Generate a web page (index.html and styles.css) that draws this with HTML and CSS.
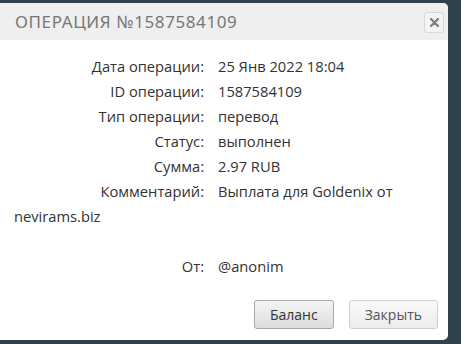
FILE: index.html
```html
<!DOCTYPE html>
<html lang="ru">
<head>
  <meta charset="UTF-8" />
  <meta name="viewport" content="width=device-width, initial-scale=1.0"/>
  <title>Операция</title>
  <link rel="stylesheet" href="styles.css">
</head>
<body>
  <div class="dialog">
    <div class="dialog-head">
      <span class="dialog-title">Операция №1587584109</span>
      <button class="close-x">
        <svg width="9" height="9" viewBox="0 0 9 9"><path d="M1 1L8 8M8 1L1 8" stroke="#808080" stroke-width="2.4" stroke-linecap="round"/></svg>
      </button>
    </div>
    <div class="dialog-body">
      <div class="row"><span class="label">Дата операции:</span>25 Янв 2022 18:04</div>
      <div class="row"><span class="label">ID операции:</span>1587584109</div>
      <div class="row"><span class="label">Тип операции:</span>перевод</div>
      <div class="row"><span class="label">Статус:</span>выполнен</div>
      <div class="row"><span class="label">Сумма:</span>2.97 RUB</div>
      <div class="row"><span class="label">Комментарий:</span>Выплата для Goldenix от nevirams.biz</div>
      <div class="row spacer"></div>
      <div class="row"><span class="label">От:</span>@anonim</div>
    </div>
    <div class="dialog-foot">
      <button class="btn">Баланс</button>
      <button class="btn btn-light">Закрыть</button>
    </div>
  </div>
</body>
</html>
```

FILE: styles.css
```css
html, body {
  margin: 0;
  padding: 0;
  height: 100%;
  overflow: hidden;
  background: #31414a;
  font-family: "Open Sans", sans-serif;
}

.dialog {
  width: 448px;
  height: 337px;
  margin-top: 3px;
  background: #fff;
  border-radius: 0 5px 5px 0;
  display: flex;
  flex-direction: column;
  overflow: hidden;
}

.dialog-head {
  height: 37px;
  background: #efefef;
  display: flex;
  align-items: center;
  justify-content: space-between;
  padding: 0 4px 0 15px;
}

.dialog-title {
  text-transform: uppercase;
  font-family: "Noto Sans", sans-serif;
  font-size: 17px;
  letter-spacing: 0.6px;
  color: #777;
}

.close-x {
  width: 20px;
  height: 21px;
  padding: 0;
  margin-top: 2px;
  border: 1px solid #d8d8d8;
  border-radius: 3px;
  background: #f3f3f3;
  display: flex;
  align-items: center;
  justify-content: center;
}

.dialog-body {
  flex: 1;
  padding: 14px 20px 0 14px;
  font-size: 14.7px;
  color: #333;
}

.row {
  line-height: 25px;
}

.spacer {
  height: 25px;
}

.label {
  display: inline-block;
  width: 190px;
  text-align: right;
  margin-right: 14px;
}

.dialog-foot {
  display: flex;
  justify-content: flex-end;
  gap: 15px;
  padding: 0 10px 11px 0;
}

.btn {
  height: 29px;
  padding: 0 15px;
  font-family: "Open Sans", sans-serif;
  font-size: 14px;
  color: #333;
  border: 1px solid #aaa;
  border-radius: 3px;
  background: linear-gradient(#f4f4f4, #dcdcdc);
}

.btn-light {
  color: #555;
  border-color: #d0d0d0;
  background: linear-gradient(#fafafa, #ececec);
}
```
